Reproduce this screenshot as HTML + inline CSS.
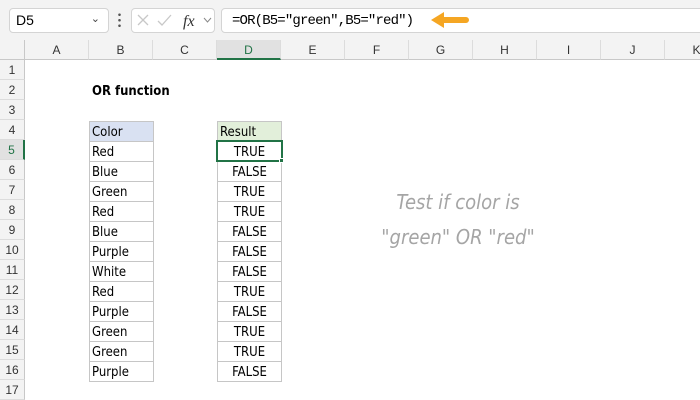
<!DOCTYPE html>
<html><head><meta charset="utf-8"><style>
*{margin:0;padding:0;box-sizing:border-box}
body{width:700px;height:400px;overflow:hidden;background:#fff;font-family:"Liberation Sans",sans-serif;position:relative}
.abs{position:absolute}
.top{left:0;top:0;width:700px;height:40px;background:#f3f3f3}
.box{background:#fff;border:1px solid #d4d4d4;border-radius:4px}
.ch{top:40px;height:20px;background:#f3f3f3;border-bottom:1px solid #c8c8c8;border-right:1px solid #dcdcdc;font-size:12px;color:#333;text-align:center;line-height:20px}
.rh{left:0;width:25px;height:20px;background:#f3f3f3;border-right:1px solid #c8c8c8;border-bottom:1px solid #dcdcdc;font-size:12px;color:#333;text-align:center;line-height:20px}
.c{height:21px;border:1px solid #c6c6c6;line-height:22px;padding-left:2px;color:#000;font-family:"DejaVu Sans Condensed","Liberation Sans",sans-serif;font-size:13px}
.ann{color:#a5a5a5;font-size:20px;font-family:"DejaVu Sans Condensed","Liberation Sans",sans-serif;font-style:italic;text-align:center;width:260px;left:328px}
</style></head><body>
<div class="abs top"></div>
<div class="abs box" style="left:9px;top:8px;width:100px;height:25px;font-size:14px;line-height:23px;padding-left:6px">D5<span style="position:absolute;right:8px;top:-1px;font-size:11px;color:#444">&#8964;</span></div>
<div class="abs" style="left:118px;top:12px;width:3px;height:16px;background:radial-gradient(circle,#555 1.2px,transparent 1.4px) 0 0/3px 5.5px"></div>
<div class="abs box" style="left:131px;top:8px;width:84px;height:25px"></div>
<svg class="abs" style="left:131px;top:8px" width="84" height="25"><path d="M7 7l10 10M17 7L7 17" stroke="#c8c8c8" stroke-width="1.3"/><path d="M27 13l4 4 9-10" stroke="#c8c8c8" stroke-width="1.3" fill="none"/><text x="52" y="18" font-family="Liberation Serif" font-style="italic" font-size="16" fill="#333">fx</text><path d="M73 10l3.5 4 3.5-4" stroke="#888" fill="none"/></svg>
<div class="abs box" style="left:221px;top:8px;width:490px;height:25px;font-family:'Liberation Mono',monospace;font-size:14px;letter-spacing:-0.85px;line-height:24px;padding-left:10px;color:#000">=OR(B5="green",B5="red")</div>
<svg class="abs" style="left:429px;top:11px" width="42" height="18"><path d="M2 9L15 1V6H37a3 3 0 0 1 0 6H15V17Z" fill="#f5a623"/></svg>
<div class="abs" style="left:0;top:40px;width:25px;height:20px;background:#f3f3f3;border-bottom:1px solid #c8c8c8;border-right:1px solid #c8c8c8"></div>
<div class="abs ch" style="left:25px;width:64px">A</div>
<div class="abs ch" style="left:89px;width:64px">B</div>
<div class="abs ch" style="left:153px;width:64px">C</div>
<div class="abs ch" style="left:217px;width:64px;background:#e1e1e1;border-bottom:2px solid #217346;color:#217346">D</div>
<div class="abs ch" style="left:281px;width:64px">E</div>
<div class="abs ch" style="left:345px;width:64px">F</div>
<div class="abs ch" style="left:409px;width:64px">G</div>
<div class="abs ch" style="left:473px;width:64px">H</div>
<div class="abs ch" style="left:537px;width:64px">I</div>
<div class="abs ch" style="left:601px;width:64px">J</div>
<div class="abs ch" style="left:665px;width:64px">K</div>
<div class="abs rh" style="top:60px">1</div><div class="abs rh" style="top:80px">2</div><div class="abs rh" style="top:100px">3</div><div class="abs rh" style="top:120px">4</div>
<div class="abs rh" style="top:140px;background:#e1e1e1;border-right:2px solid #217346;color:#217346">5</div>
<div class="abs rh" style="top:160px">6</div><div class="abs rh" style="top:180px">7</div><div class="abs rh" style="top:200px">8</div><div class="abs rh" style="top:220px">9</div><div class="abs rh" style="top:240px">10</div><div class="abs rh" style="top:260px">11</div><div class="abs rh" style="top:280px">12</div><div class="abs rh" style="top:300px">13</div><div class="abs rh" style="top:320px">14</div><div class="abs rh" style="top:340px">15</div><div class="abs rh" style="top:360px">16</div><div class="abs rh" style="top:380px">17</div>
<div class="abs" style="left:92px;top:82px;font-weight:bold;font-size:13px;line-height:20px;font-family:'DejaVu Sans Condensed',sans-serif">OR function</div>
<div class="abs c" style="left:89px;top:121px;width:65px;background:#d9e1f2">Color</div>
<div class="abs c" style="left:217px;top:121px;width:65px;background:#e2efda">Result</div>
<div class="abs" style="left:89px;top:141px">
<div class="c" style="width:65px;margin-top:0">Red</div>
<div class="c" style="width:65px;margin-top:-1px">Blue</div>
<div class="c" style="width:65px;margin-top:-1px">Green</div>
<div class="c" style="width:65px;margin-top:-1px">Red</div>
<div class="c" style="width:65px;margin-top:-1px">Blue</div>
<div class="c" style="width:65px;margin-top:-1px">Purple</div>
<div class="c" style="width:65px;margin-top:-1px">White</div>
<div class="c" style="width:65px;margin-top:-1px">Red</div>
<div class="c" style="width:65px;margin-top:-1px">Purple</div>
<div class="c" style="width:65px;margin-top:-1px">Green</div>
<div class="c" style="width:65px;margin-top:-1px">Green</div>
<div class="c" style="width:65px;margin-top:-1px">Purple</div>
</div>
<div class="abs" style="left:217px;top:141px;text-align:center">
<div class="c" style="width:65px;padding:0">TRUE</div>
<div class="c" style="width:65px;padding:0;margin-top:-1px">FALSE</div>
<div class="c" style="width:65px;padding:0;margin-top:-1px">TRUE</div>
<div class="c" style="width:65px;padding:0;margin-top:-1px">TRUE</div>
<div class="c" style="width:65px;padding:0;margin-top:-1px">FALSE</div>
<div class="c" style="width:65px;padding:0;margin-top:-1px">FALSE</div>
<div class="c" style="width:65px;padding:0;margin-top:-1px">FALSE</div>
<div class="c" style="width:65px;padding:0;margin-top:-1px">TRUE</div>
<div class="c" style="width:65px;padding:0;margin-top:-1px">FALSE</div>
<div class="c" style="width:65px;padding:0;margin-top:-1px">TRUE</div>
<div class="c" style="width:65px;padding:0;margin-top:-1px">TRUE</div>
<div class="c" style="width:65px;padding:0;margin-top:-1px">FALSE</div>
</div>
<div class="abs" style="left:216px;top:140px;width:67px;height:22px;border:2px solid #217346"></div>
<div class="abs" style="left:279px;top:158px;width:5px;height:5px;background:#217346;border:1px solid #fff"></div>
<div class="abs ann" style="top:190px">Test if color is</div>
<div class="abs ann" style="top:225px">"green" OR "red"</div>
</body></html>
